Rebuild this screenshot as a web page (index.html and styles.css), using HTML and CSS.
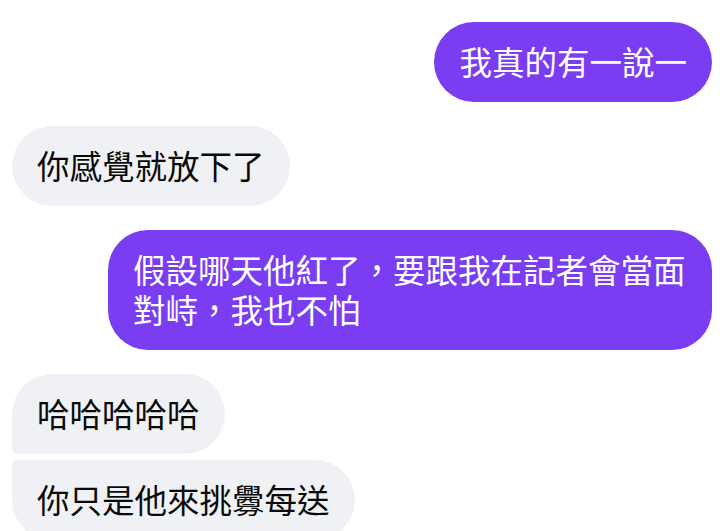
FILE: index.html
```html
<!DOCTYPE html>
<html lang="zh-Hant">
<head>
    <meta charset="UTF-8">
    <title>聊天</title>
    <link rel="stylesheet" href="styles.css">
</head>
<body>
    <div class="thread">
        <div class="group mine">
            <div class="bubble">我真的有一說一</div>
        </div>
        <div class="group theirs">
            <div class="bubble">你感覺就放下了</div>
        </div>
        <div class="group mine">
            <div class="bubble">假設哪天他紅了，要跟我在記者會當面對峙，我也不怕</div>
        </div>
        <div class="group theirs">
            <div class="bubble first">哈哈哈哈哈</div>
            <div class="bubble last">你只是他來挑釁每送</div>
        </div>
    </div>
</body>
</html>
```

FILE: styles.css
```css
html, body { height: 100%; overflow: hidden; }
body { margin: 0; background: #fff; font-family: "Noto Sans CJK TC", "Noto Sans", sans-serif; }
.thread { display: flex; flex-direction: column; gap: 24px; padding: 22px 16px 0 12px; }
.group { display: flex; flex-direction: column; gap: 6px; }
.mine { align-items: flex-end; }
.theirs { align-items: flex-start; }
.bubble { max-width: 604px; box-sizing: border-box; padding: 19px 25px 21px; font-size: 32.5px; line-height: 40px; border-radius: 40px; }
.mine .bubble { background: #7a3df2; color: #fff; }
.theirs .bubble { background: #f0f1f4; color: #0a0a0a; }
.theirs .first { border-bottom-left-radius: 5px; }
.theirs .last { border-top-left-radius: 5px; }
```
